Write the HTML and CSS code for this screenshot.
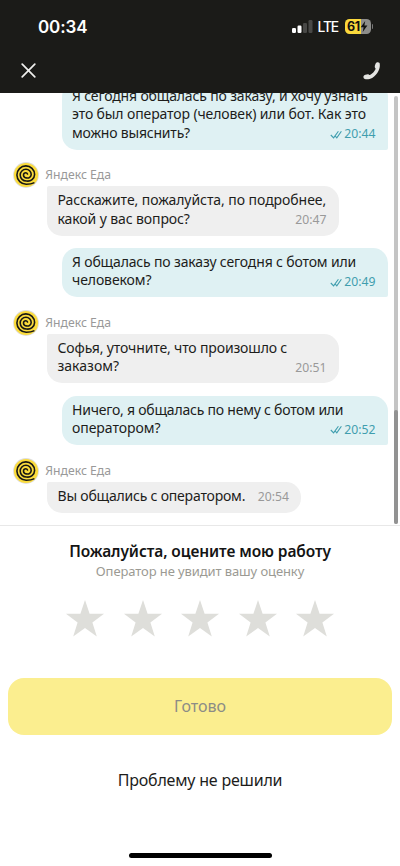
FILE: index.html
```html
<!DOCTYPE html>
<html lang="ru">
<head>
<meta charset="utf-8">
<meta name="viewport" content="width=device-width, initial-scale=1">
<title>Яндекс Еда</title>
<link rel="stylesheet" href="styles.css">
</head>
<body>
<svg class="defs" width="0" height="0">
  <symbol id="logo" viewBox="0 0 26 26">
    <circle cx="13" cy="13" r="12.9" fill="#dedede"/>
    <circle cx="13" cy="13" r="12.1" fill="#fbdc3c"/>
    <path d="M20.8 20.9C18.500 22 16 22.200 13.500 22.200A9.300 9.300 0 0 1 3.900 13A9 9 0 0 1 12.900 3.900A8.700 8.700 0 0 1 21.600 12.500A6.800 6.800 0 0 1 13.500 19A6.100 6.100 0 0 1 7.200 13A5.700 5.700 0 0 1 12.900 7.300A5.200 5.200 0 0 1 18.200 12.500A3.700 3.700 0 0 1 13.500 15.900A2.900 2.900 0 0 1 10.500 13.100A2.300 2.300 0 0 1 12.800 10.700Q14 10.700 14.500 12" fill="none" stroke="#171714" stroke-width="1.6" stroke-linecap="round"/>
  </symbol>
  <symbol id="read" viewBox="0 0 12 9">
    <path d="M.8 5L3.6 7.8L8.4 1.2M5.3 6.2L6.8 7.8L11.4 1.2" fill="none" stroke="#3f9eae" stroke-width="1.1"/>
  </symbol>
  <symbol id="star" viewBox="0 0 38 37">
    <path d="M19 0L23.6 13.7L38 13.8L26.4 22.4L30.8 36.5L19 28L7.2 36.5L11.6 22.4L0 13.8L14.4 13.7Z" fill="#dededa"/>
  </symbol>
</svg>
<div class="screen">
  <header class="top">
    <div class="status">
      <span class="clock">00:34</span>
      <div class="indicators">
        <svg class="signal" width="21" height="13" viewBox="0 0 21 13">
          <rect x="0" y="8" width="4" height="5" rx="1.2" fill="#fff"/>
          <rect x="5.5" y="5.6" width="4" height="7.4" rx="1.2" fill="#fff"/>
          <rect x="11" y="3" width="4" height="10" rx="1.2" fill="#484846"/>
          <rect x="16.5" y="0" width="4" height="13" rx="1.2" fill="#484846"/>
        </svg>
        <span class="network">LTE</span>
        <div class="battery">
          <span class="level">61</span>
          <svg width="8" height="11" viewBox="0 0 8 11"><path d="M5.2 0L.7 6.2H3.6L2.7 11L7.4 4.6H4.4Z" fill="#111"/></svg>
        </div>
        <i class="battery-tip"></i>
      </div>
    </div>
    <div class="bar">
      <svg width="15" height="15" viewBox="0 0 15 15"><path d="M1.2 1.2L13.8 13.8M13.8 1.2L1.2 13.8" stroke="#efefed" stroke-width="1.7" stroke-linecap="round"/></svg>
      <svg class="phone" width="18" height="18" viewBox="0 0 18 18"><path d="M13.6 .6C14.6 .1 16 .4 16.6 1.1C17.8 6.200 14.800 12.600 9.200 15.900C6.500 17.400 3.400 17.900 1.300 16.700C.5 16 .2 14.800 .6 13.900C1.200 12.900 4.200 12 5.300 12.300C6 12.500 6.300 13.300 7 13C9.500 11.600 11.400 9.600 12.600 7C12.800 6.400 12 6 11.800 5.300C11.500 4.100 12.500 1.200 13.600 .6Z" fill="#e4e4e1"/></svg>
    </div>
  </header>

  <main class="chat">
    <div class="thread">
      <div class="bubble out first">
        <p class="a1">Я сегодня общалась по заказу, и хочу узнать</p>
        <p class="a2">это был оператор (человек) или бот. Как это</p>
        <p class="a3">можно выяснить?</p>
        <span class="time"><svg width="12" height="9"><use href="#read"/></svg>20:44</span>
      </div>
      <div class="sender"><svg width="26" height="26"><use href="#logo"/></svg><span>Яндекс Еда</span></div>
      <div class="bubble in">
        <p class="b1">Расскажите, пожалуйста, по подробнее,</p>
        <p class="b2">какой у вас вопрос?</p>
        <span class="time">20:47</span>
      </div>
      <div class="bubble out">
        <p class="c1">Я общалась по заказу сегодня с ботом или</p>
        <p class="c2">человеком?</p>
        <span class="time"><svg width="12" height="9"><use href="#read"/></svg>20:49</span>
      </div>
      <div class="sender"><svg width="26" height="26"><use href="#logo"/></svg><span>Яндекс Еда</span></div>
      <div class="bubble in">
        <p class="d1">Софья, уточните, что произошло с</p>
        <p class="d2">заказом?</p>
        <span class="time">20:51</span>
      </div>
      <div class="bubble out">
        <p class="e1">Ничего, я общалась по нему с ботом или</p>
        <p class="e2">оператором?</p>
        <span class="time"><svg width="12" height="9"><use href="#read"/></svg>20:52</span>
      </div>
      <div class="sender"><svg width="26" height="26"><use href="#logo"/></svg><span>Яндекс Еда</span></div>
      <div class="bubble in single">
        <p class="f1">Вы общались с оператором.</p>
        <span class="time">20:54</span>
      </div>
    </div>
    <div class="track"><div class="thumb"></div></div>
  </main>

  <section class="rating">
    <h1>Пожалуйста, оцените мою работу</h1>
    <p class="note">Оператор не увидит вашу оценку</p>
    <div class="stars">
      <svg width="38" height="37"><use href="#star"/></svg>
      <svg width="38" height="37"><use href="#star"/></svg>
      <svg width="38" height="37"><use href="#star"/></svg>
      <svg width="38" height="37"><use href="#star"/></svg>
      <svg width="38" height="37"><use href="#star"/></svg>
    </div>
    <button class="done">Готово</button>
    <button class="unsolved">Проблему не решили</button>
    <div class="home"></div>
  </section>
</div>
</body>
</html>
```
FILE: styles.css
```css
* { box-sizing: border-box; margin: 0; padding: 0; }
body { background: #fff; font-family: "Noto Sans", sans-serif; color: #1d1d1b; }
svg { display: block; flex: none; }
.defs { position: absolute; }
.screen { width: 400px; height: 866px; display: flex; flex-direction: column; overflow: hidden; }

.top { height: 93px; flex: none; background: #1b1b18; }
.status { height: 53px; padding: 0 27px 0 38px; display: flex; align-items: center; justify-content: space-between; color: #fff; }
.clock { font: 600 17px/20px Inter, sans-serif; letter-spacing: -0.1px; }
.indicators { display: flex; align-items: center; }
.network { width: 21px; font: 500 13.8px/18px Inter, sans-serif; margin: 1px 6px 0 5px; letter-spacing: -1.1px; }
.battery { width: 26px; height: 15px; border-radius: 4.5px; background: linear-gradient(90deg, #fbd93c 61%, #8d8d8b 61%); display: flex; align-items: center; justify-content: center; color: #111; }
.level { font: 700 12.5px/15px Inter, sans-serif; letter-spacing: -0.3px; }
.battery-tip { width: 1.5px; height: 5px; margin-left: 1px; border-radius: 0 2px 2px 0; background: #777; }
.bar { height: 34px; padding: 0 19.5px 0 21px; display: flex; align-items: center; justify-content: space-between; }
.phone { margin-top: 1px; }

.chat { height: 433px; flex: none; display: flex; overflow: hidden; border-bottom: 1px solid #e8e8e8; }
.thread { width: 392px; flex: none; display: flex; flex-direction: column; justify-content: flex-end; padding-bottom: 12.3px; }
.bubble { flex: none; height: 49.2px; padding: 4.6px 11px 0 10.5px; display: grid; grid-template-columns: 1fr auto; align-content: start; font-size: 14px; line-height: 18.5px; }
.bubble p { grid-column: 1 / 3; white-space: nowrap; }
.bubble p:nth-last-of-type(1) { grid-column: 1; }
.bubble .time { grid-column: 2; padding-top: 1.5px; }
.out { width: 326.5px; margin-left: 61.5px; border-radius: 15px 15px 2px 15px; background: #dff1f3; }
.out .time { padding-right: 1.5px; color: #3f9eae; }
.in { width: 291.5px; margin: 0 0 12.6px 47px; border-radius: 2px 15px 15px 15px; background: #efefef; }
.in .time { color: #999; padding-right: 1px; }
.first { height: 67.7px; }
.single { width: 254px; height: 30.7px; margin-bottom: 0; }
.time { display: flex; align-items: center; gap: 2px; font-size: 12.2px; }
.a1 { letter-spacing: -0.16px; }
.a2 { letter-spacing: -0.12px; }
.a3 { letter-spacing: -0.2px; }
.b1 { letter-spacing: -0.06px; }
.b2 { letter-spacing: -0.1px; }
.c1 { letter-spacing: -0.16px; }
.c2 { letter-spacing: -0.1px; }
.d1 { letter-spacing: -0.15px; }
.e1 { letter-spacing: -0.22px; }
.e2 { letter-spacing: -0.05px; }
.f1 { letter-spacing: -0.2px; }
.sender { flex: none; height: 36.8px; padding: 12.3px 0 0 12.8px; display: flex; gap: 6.5px; }
.sender svg { overflow: visible; }
.sender span { font-size: 12.2px; line-height: 25px; color: #999; }

.track { width: 4px; height: 428px; margin: 3px 0 0 2px; border-radius: 2px; background: #c4c4c4; display: flex; align-items: flex-end; }
.thumb { width: 4px; height: 114px; border-radius: 2px; background: #929292; }

.rating { flex: 1; display: flex; flex-direction: column; align-items: center; padding-top: 15px; }
h1 { font-size: 15.5px; line-height: 21px; font-weight: 600; letter-spacing: -0.09px; white-space: nowrap; color: #141414; }
.note { font-size: 13px; line-height: 19px; letter-spacing: -0.1px; color: #9b9a93; white-space: nowrap; }
.stars { display: flex; gap: 19.5px; margin-top: 19px; }
.done { width: 384px; height: 57px; margin-top: 41px; padding-bottom: 1px; border: 0; border-radius: 16px; background: #fbee8f; color: #8c8c86; font: 400 16px/22px "Noto Sans", sans-serif; }
.unsolved { border: 0; background: none; margin-top: 34px; font: 400 16px/22px "Noto Sans", sans-serif; letter-spacing: -0.2px; color: #1d1d1b; }
.home { width: 143px; height: 5px; border-radius: 3px; background: #000; margin-top: 62px; }
```
